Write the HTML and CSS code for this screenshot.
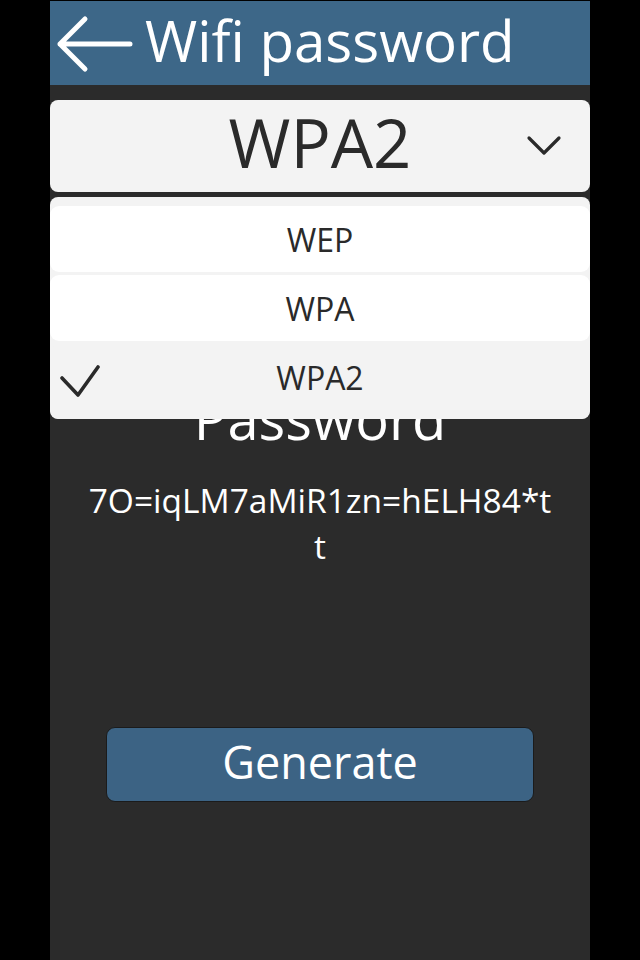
FILE: index.html
```html
<!DOCTYPE html>
<html>
<head>
<meta charset="utf-8">
<link rel="stylesheet" href="styles.css">
</head>
<body>
<div class="app">
  <header class="topbar">
    <svg class="back" viewBox="0 0 90 84" width="90" height="84">
      <path d="M10 43 L35 18 M10 43 L35 68 M10 43 H80" fill="none" stroke="#fff" stroke-width="5" stroke-linecap="round" stroke-linejoin="round"/>
    </svg>
    <h1 class="title">Wifi password</h1>
  </header>
  <main class="content">
    <div class="select">
      <span></span>
      <span class="select-value">WPA2</span>
      <svg class="chevron" viewBox="0 0 36 22" width="36" height="22">
        <path d="M3 3 L18 18 L33 3" fill="none" stroke="#2a2a2a" stroke-width="3.2" stroke-linecap="round" stroke-linejoin="round"/>
      </svg>
    </div>
    <div class="label">Password</div>
    <div class="value">7O=iqLM7aMiR1zn=hELH84*tt</div>
    <button class="generate">Generate</button>
  </main>
  <ul class="menu">
    <li class="item">WEP</li>
    <li class="item">WPA</li>
    <li class="item selected">
      <svg class="check" viewBox="0 0 50 40" width="50" height="40">
        <path d="M12 20 L28 37 L48 9" fill="none" stroke="#2a2a2a" stroke-width="3.6" stroke-linecap="round" stroke-linejoin="round"/>
      </svg>
      <span class="item-text">WPA2</span>
      <span></span>
    </li>
  </ul>
</div>
</body>
</html>
```
FILE: styles.css
```css
html, body {
  margin: 0;
  padding: 0;
  background: #000;
}
body {
  font-family: "Open Sans", "Noto Sans", sans-serif;
}
.app {
  position: relative;
  width: 540px;
  height: 960px;
  margin-left: 50px;
  background: #2b2b2b;
}
.topbar {
  height: 84px;
  margin-top: 1px;
  background: #3d6788;
  display: flex;
  align-items: flex-start;
}
.back {
  display: block;
  flex: none;
}
.title {
  margin: 0 0 0 5px;
  font-size: 56.5px;
  font-weight: 400;
  line-height: 80px;
  color: #fff;
  white-space: nowrap;
}
.content {
  display: flex;
  flex-direction: column;
  align-items: center;
}
.select {
  margin-top: 15px;
  width: 540px;
  height: 92px;
  box-sizing: border-box;
  background: #f3f3f3;
  border-radius: 8px;
  display: grid;
  grid-template-columns: 1fr auto 1fr;
  align-items: center;
  padding-bottom: 8px;
}
.select-value {
  font-size: 67px;
  line-height: 1;
  color: #2a2a2a;
}
.chevron {
  justify-self: end;
  margin-right: 28px;
  margin-top: 8px;
}
.label {
  margin-top: 191px;
  font-size: 56px;
  line-height: 70px;
  color: #fff;
}
.value {
  margin-top: 24px;
  width: 465px;
  font-size: 33.5px;
  line-height: 46px;
  color: #fff;
  text-align: center;
  word-break: break-all;
}
.generate {
  margin-top: 158px;
  width: 428px;
  height: 75px;
  background: #3c6384;
  border: 1.5px solid #1b1b1b;
  border-radius: 9px;
  color: #fff;
  font-family: "Open Sans", "Noto Sans", sans-serif;
  font-size: 45px;
  line-height: 1;
  padding: 0 0 6px 0;
}
.menu {
  position: absolute;
  top: 196px;
  left: 0;
  width: 540px;
  margin: 0;
  padding: 9px 0 0 0;
  list-style: none;
  background: #f3f3f3;
  border-radius: 8px;
  box-sizing: border-box;
  height: 222px;
  display: flex;
  flex-direction: column;
  gap: 3px;
  overflow: hidden;
}
.item {
  height: 66px;
  background: #fff;
  border-radius: 9px;
  display: flex;
  align-items: center;
  justify-content: center;
  font-size: 32px;
  color: #2a2a2a;
}
.item.selected {
  flex: 1;
  background: #f3f3f3;
  display: grid;
  grid-template-columns: 1fr auto 1fr;
  align-items: center;
  padding-bottom: 7px;
}
.check {
  display: block;
}
.item-text {
  line-height: 1;
}
```
